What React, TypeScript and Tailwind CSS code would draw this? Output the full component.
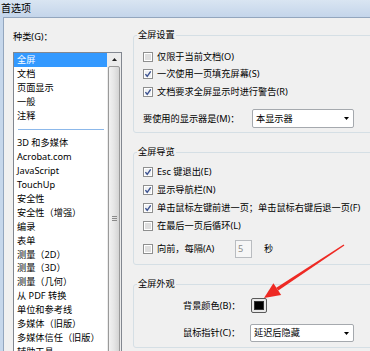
const categoriesTop = ["全屏", "文档", "页面显示", "一般", "注释"];
const categoriesRest = [
  "3D 和多媒体",
  "Acrobat.com",
  "JavaScript",
  "TouchUp",
  "安全性",
  "安全性（增强）",
  "编录",
  "表单",
  "测量（2D）",
  "测量（3D）",
  "测量（几何）",
  "从 PDF 转换",
  "单位和参考线",
  "多媒体（旧版）",
  "多媒体信任（旧版）",
  "辅助工具",
];

function CheckBox({ checked = false }: { checked?: boolean }) {
  return (
    <svg width="10" height="10" viewBox="0 0 10 10" className="shrink-0">
      <rect x="0.5" y="0.5" width="9" height="9" fill="#fff" stroke="#8e8f8f" />
      <rect x="2" y="2" width="6" height="6" fill={checked ? "#eef0f3" : "#dedede"} />
      {checked && (
        <path d="M2.4 5.1 L4.2 7.3 L7.7 2.3" fill="none" stroke="#3c5290" strokeWidth="1.4" />
      )}
    </svg>
  );
}

function Row({ label, checked }: { label: string; checked?: boolean }) {
  return (
    <div className="flex h-[17.5px] items-center gap-[4px]">
      <CheckBox checked={checked} />
      <span>{label}</span>
    </div>
  );
}

function NavRow({ label, checked }: { label: string; checked?: boolean }) {
  return (
    <div className="flex h-[18px] items-center gap-[4px]">
      <CheckBox checked={checked} />
      <span>{label}</span>
    </div>
  );
}

function Combo({ text, className }: { text: string; className: string }) {
  return (
    <div
      className={`flex items-center justify-between rounded-[2px] border border-[#a5a9ae] bg-white pl-[3px] pr-[4px] ${className}`}
    >
      <span>{text}</span>
      <svg width="5" height="3" viewBox="0 0 5 3">
        <path d="M0 0H5L2.5 3Z" fill="#000" />
      </svg>
    </div>
  );
}

function Group({ title, children, className = "" }: { title: string; children: React.ReactNode; className?: string }) {
  return (
    <fieldset className={`w-[250px] rounded-[3px] border border-[#d5dfe5] ${className}`}>
      <legend className="ml-[3px] px-[1px] leading-[12px]">{title}</legend>
      {children}
    </fieldset>
  );
}

export default function App() {
  return (
    <div className="relative h-[351px] w-[370px] overflow-hidden bg-[#c6d7eb] font-['Noto_Sans','Noto_Sans_CJK_SC',sans-serif] text-[9.2px] text-black">
      <div className="flex h-[17px] items-center bg-gradient-to-b from-[#d9e5f2] to-[#c4d5ea] pl-[1px] text-[10px]">
        首选项
      </div>

      <div className="ml-[3px] flex h-[334px] border-l border-t border-[#93a6be] bg-[#f0f0f0]">
        {/* left: category list */}
        <div className="w-[129px] shrink-0 pl-[9px] pt-[13px]">
          <div className="h-[12px] leading-[12px]">种类(G)：</div>
          <div className="mt-[9px] flex h-[320px] w-[109px] border border-[#828790] bg-white">
            <div className="w-[93px] shrink-0">
              {categoriesTop.map((c, i) => (
                <div
                  key={c}
                  className={`flex h-[13.9px] items-center px-[3px] ${i === 0 ? "bg-[#3399ff] text-white" : ""}`}
                >
                  {c}
                </div>
              ))}
              <div className="flex h-[13.9px] items-center pl-[4px] pr-[3px]">
                <div className="h-px w-full bg-[#8cb8ea]" />
              </div>
              {categoriesRest.map((c) => (
                <div key={c} className="flex h-[13.9px] items-center px-[3px]">
                  {c}
                </div>
              ))}
            </div>
            <div className="flex w-[14px] shrink-0 flex-col bg-[#ececec]">
              <div className="flex h-[14px] items-center justify-center">
                <svg width="5" height="3" viewBox="0 0 5 3">
                  <path d="M0 3H5L2.5 0Z" fill="#222" />
                </svg>
              </div>
              <div className="mx-[1px] flex h-[316px] items-center justify-center rounded-[2px] border border-[#9a9a9a] bg-gradient-to-r from-[#f2f2f2] via-[#e6e6e6] to-[#d4d4d4]">
                <div className="flex flex-col gap-[1px]">
                  <div className="h-px w-[5px] bg-[#8a8a8a]" />
                  <div className="h-px w-[5px] bg-[#8a8a8a]" />
                  <div className="h-px w-[5px] bg-[#8a8a8a]" />
                </div>
              </div>
            </div>
          </div>
        </div>

        {/* right: settings groups */}
        <div className="shrink-0 pt-[11px]">
          <Group title="全屏设置" className="pb-[4px]">
            <div className="pl-[9px] pt-[7px]">
              <Row label="仅限于当前文档(O)" />
              <Row label="一次使用一页填充屏幕(S)" checked />
              <Row label="文档要求全屏显示时进行警告(R)" checked />
              <div className="mt-[8.5px] flex items-center">
                <span className="w-[109px]">要使用的显示器是(M)：</span>
                <Combo text="本显示器" className="h-[19px] w-[102px]" />
              </div>
            </div>
          </Group>

          <Group title="全屏导览" className="mt-[13px] pb-[6px]">
            <div className="pl-[9px] pt-[5px]">
              <NavRow label="Esc 键退出(E)" checked />
              <NavRow label="显示导航栏(N)" checked />
              <NavRow label="单击鼠标左键前进一页；单击鼠标右键后退一页(F)" checked />
              <NavRow label="在最后一页后循环(L)" />
              <div className="mt-[5px] flex h-[18px] items-center">
                <CheckBox />
                <span className="ml-[4px] w-[78px]">向前，每隔(A)</span>
                <div className="flex h-[18px] w-[17px] items-center border border-[#b9bcc0] bg-[#f6f6f6] pl-[2px] text-[#8a8a8a]">
                  5
                </div>
                <span className="ml-[12px]">秒</span>
              </div>
            </div>
          </Group>

          <Group title="全屏外观" className="mt-[13px] pb-[5px]">
            <div className="pl-[49px] pt-[8px]">
              <div className="flex h-[15px] items-center">
                <span className="w-[68px]">背景颜色(B)：</span>
                <div className="flex h-[15px] w-[16px] items-center justify-center rounded-[2px] border border-[#5a5a5a] bg-[#e8e8e8]">
                  <div className="h-[9px] w-[10px] border border-[#333] bg-black" />
                </div>
              </div>
              <div className="mt-[11px] flex h-[18px] items-center">
                <span className="w-[67px]">鼠标指针(C)：</span>
                <Combo text="延迟后隐藏" className="h-[18px] w-[104px]" />
              </div>
            </div>
          </Group>
        </div>
      </div>

      <svg className="pointer-events-none absolute left-0 top-0" width="370" height="351" viewBox="0 0 370 351">
        <polygon points="343.6,244.4 344.4,245.6 278.3,290.4 276.3,287.8" fill="#ee2a24" />
        <polygon points="264,298 273.4,283.3 281.2,294.9" fill="#ee2a24" />
      </svg>
    </div>
  );
}
